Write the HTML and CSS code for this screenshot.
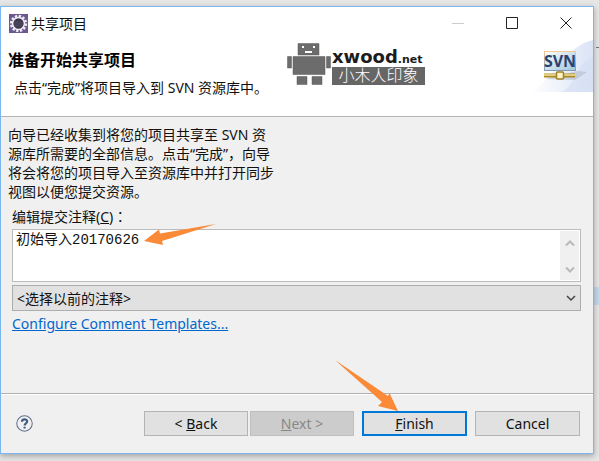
FILE: index.html
```html
<!DOCTYPE html>
<html lang="zh-CN">
<head>
<meta charset="utf-8">
<title>共享项目</title>
<link rel="stylesheet" href="styles.css">
</head>
<body>
<form class="dialog">
  <header class="titlebar">
    <svg class="app-icon" viewBox="0 0 20 20" aria-hidden="true">
      <rect width="20" height="20" fill="#6a588f"/>
      <circle cx="10" cy="10" r="7.600" fill="none" stroke="#f0edf4" stroke-width="3" stroke-dasharray="2.400 1.580"/>
      <circle cx="10" cy="10" r="6.200" fill="#3b374a" stroke="#f0edf4" stroke-width="1.600"/>
      <path d="M5.500 8.500h9M5 10.500h10M5.500 12.500h9" stroke="#5c5670" stroke-width=".8"/>
    </svg>
    <span class="title">共享项目</span>
    <div class="controls">
      <button type="button" class="control" aria-label="Minimize" disabled><svg viewBox="0 0 12 12"><path d="M0 6.500h12" stroke="#ccc"/></svg></button>
      <button type="button" class="control" aria-label="Maximize"><svg viewBox="0 0 12 12"><path d="M.5 .5h11v11h-11z" stroke="#222"/></svg></button>
      <button type="button" class="control" aria-label="Close"><svg viewBox="0 0 12 12"><path d="M.5 .5l11 11M11.500 .5l-11 11" stroke="#222"/></svg></button>
    </div>
  </header>

  <section class="banner">
    <div class="banner-text">
      <h1>准备开始共享项目</h1>
      <p>点击“完成”将项目导入到 SVN 资源库中。</p>
    </div>
    <div class="watermark">
      <svg class="robot" viewBox="0 0 44 42" aria-hidden="true">
        <g fill="#6c6c6c" stroke="#5a5a5a" stroke-width=".5">
          <path d="M11 .5h21v11.500H11zM6 13.500h32v18H6zM.5 13.500h4v11.500h-4zM39.500 13.500h4v11.500h-4zM10 33.500h10v8H10zM25 33.500h10v8H25z"/>
        </g>
        <path d="M15 3h2v2h-2zM26 3h2v2h-2zM18 8h7v2h-7z" fill="#fff"/>
      </svg>
      <div class="brand">
        <span class="brand-name">xwood<small>.net</small></span>
        <span class="brand-tag">小木人印象</span>
      </div>
    </div>
    <svg class="svn-art" viewBox="0 0 64 52" role="img" aria-label="SVN">
      <defs>
        <linearGradient id="glow" x1="0" x2="1"><stop offset="0" stop-color="#fff"/><stop offset="1" stop-color="#dbe4f6"/></linearGradient>
        <linearGradient id="card" x1="0" y1="0" x2="1" y2="1"><stop offset="0" stop-color="#fff"/><stop offset="1" stop-color="#9fc4dc"/></linearGradient>
        <linearGradient id="edge" x1="0" y1="0" x2="0" y2="1"><stop offset="0" stop-color="#f3c795"/><stop offset="1" stop-color="#7f9bb0"/></linearGradient>
      </defs>
      <path d="M0 52C25 42 32 8 64 0v52z" fill="url(#glow)"/>
      <path d="M32 52C48 46 46 22 64 17v35z" fill="#d3def4" opacity=".6"/>
      <path d="M16 39l32-8 10 1-12 8z" fill="#b3bac9" opacity=".6"/>
      <rect x="15.500" y="11.500" width="31" height="19" fill="url(#card)" stroke="url(#edge)"/>
      <text x="31" y="27" text-anchor="middle" class="svn-word">SVN</text>
      <path d="M15 35.500h31" stroke="#a98a25" stroke-width="4"/>
      <path d="M15 35h31" stroke="#f4e39a" stroke-width="1.500"/>
      <rect x="27.500" y="32" width="7" height="7" rx="1" fill="#fff5c4" stroke="#a27f24" stroke-width="1.500"/>
    </svg>
  </section>

  <main class="content">
    <p class="intro">向导已经收集到将您的项目共享至 SVN 资源库所需要的全部信息。点击“完成”，向导将会将您的项目导入至资源库中并打开同步视图以便您提交资源。</p>
    <div class="fields">
      <label for="comment">编辑提交注释(<u>C</u>)<span class="centered-mark" lang="zh-TW">：</span></label>
      <div class="comment-box">
        <textarea id="comment" spellcheck="false">初始导入20170626</textarea>
        <div class="scrollbar" aria-hidden="true">
          <svg viewBox="0 0 10 8"><path d="M1 6.500l4-4 4 4"/></svg>
          <svg viewBox="0 0 10 8"><path d="M1 1.500l4 4 4-4"/></svg>
        </div>
        <svg class="arrow arrow-comment" viewBox="0 0 72 24" aria-hidden="true"><path d="M0 17L15 5.500l1 4L72 0 18 17l1 4z"/></svg>
      </div>
      <div class="select-wrap">
        <select aria-label="选择以前的注释"><option>&lt;选择以前的注释&gt;</option></select>
        <svg viewBox="0 0 10 8" aria-hidden="true"><path d="M1 2l4 4 4-4"/></svg>
      </div>
      <a href="#templates">Configure Comment Templates...</a>
    </div>
  </main>

  <footer class="footer">
    <button type="button" class="help" aria-label="Help">
      <svg viewBox="0 0 16 16"><circle cx="8" cy="8" r="7.300"/><path class="mark" d="M5.600 6.300C5.600 3.400 10.500 3.400 10.500 6.100 10.500 7.800 8.100 7.900 8.100 9.900M8.100 11v1.800"/></svg>
    </button>
    <div class="actions">
      <div class="pager">
        <button type="button" class="btn">&lt; <u>B</u>ack</button>
        <button type="button" class="btn" disabled><u>N</u>ext &gt;</button>
      </div>
      <div class="finish">
        <button type="submit" class="btn btn-default"><u>F</u>inish</button>
        <svg class="arrow arrow-finish" viewBox="0 0 63 51" aria-hidden="true"><path d="M0 0L53 36l1.500-3L63 51 43 46l4-4z"/></svg>
      </div>
      <button type="button" class="btn">Cancel</button>
    </div>
  </footer>
</form>
</body>
</html>
```

FILE: styles.css
```css
* { box-sizing: border-box; }

body {
  margin: 0;
  padding: 6px 5px 7px 0;
  min-height: 100vh;
  display: flex;
  background:
    linear-gradient(#c5d9ea, #c5d9ea) right 0 top 287px / 5px 18px no-repeat,
    linear-gradient(#777, #777) right 0 top 47px / 3px 1px no-repeat,
    #e6e6e6;
  color: #111;
  font: 14px/19px "Noto Sans", "Noto Sans CJK SC", sans-serif;
}

h1, p { margin: 0; }
button, select, textarea { font: inherit; color: inherit; border-radius: 0; }
svg { display: block; fill: none; }

.dialog {
  flex: 1;
  display: flex;
  flex-direction: column;
  background: #f0f0f0;
  border: 1px solid #79b7ee;
  box-shadow: 0 2px 6px rgba(0, 0, 0, .3);
}

.titlebar {
  display: flex;
  align-items: center;
  height: 32px;
  padding-left: 8px;
  gap: 3px;
  background: #fff;
}
.app-icon { width: 19px; height: 19px; }
.controls { display: flex; margin-left: auto; }
.control {
  width: 54px;
  height: 32px;
  padding: 0;
  border: 0;
  background: none;
  display: grid;
  place-items: center;
}
.control svg { width: 12px; height: 12px; }

.banner {
  display: flex;
  height: 78px;
  background: #fff;
  border-bottom: 1px solid #b4b4b4;
}
.banner-text { flex: 1; padding: 10px 0 0 7px; }
.banner h1 { font-size: 16px; line-height: 22px; font-weight: 700; color: #000; }
.banner p { padding: 7px 0 0 6px; }

.watermark { display: flex; align-items: flex-start; gap: 1px; padding-top: 4px; }
.robot { width: 44px; height: 42px; }
.brand { display: flex; flex-direction: column; padding-top: 4px; width: 93px; }
.brand-name {
  height: 20px;
  font: 700 18px/20px "DejaVu Sans", sans-serif;
  color: #1c1c1c;
  white-space: nowrap;
}
.brand-name small { font-size: 11px; line-height: 1; }
.brand-tag {
  height: 18px;
  background: #666;
  color: #fff;
  text-align: center;
  font-size: 16px;
  line-height: 17px;
  font-weight: 300;
}
.svn-art { width: 64px; height: 52px; margin: 1px 0 0 104px; }
.svn-word { font: 700 16px "Open Sans", sans-serif; fill: #2c4370; }

.content { flex: 1; padding: 8px 12px 0 7px; }
.intro { width: 266px; }
.centered-mark { font-family: "Noto Sans CJK TC", sans-serif; line-height: 1; }
.fields { display: flex; flex-direction: column; align-items: stretch; padding: 6px 0 0 4px; }
.fields a { align-self: flex-start; margin-top: 3px; color: #0067cd; }

.comment-box {
  position: relative;
  display: flex;
  height: 53px;
  margin-top: 3px;
  padding: 1px;
  background: #fff;
  border: 1px solid #bcbcbc;
}
textarea {
  flex: 1;
  border: 0;
  padding: 0 2px;
  resize: none;
  outline: 0;
  overflow: hidden;
  background: none;
  font: 14px/18px "Liberation Mono", "Noto Sans CJK SC", monospace;
}
.scrollbar {
  width: 19px;
  padding: 8px 0 6px;
  display: flex;
  flex-direction: column;
  align-items: center;
  justify-content: space-between;
  background: #f0f0f0;
}
.scrollbar svg { width: 10px; height: 8px; stroke: #b9b9b9; stroke-width: 2; }

.select-wrap { display: grid; align-items: center; margin-top: 3px; }
.select-wrap > * { grid-area: 1 / 1; }
.select-wrap svg { justify-self: end; width: 10px; height: 8px; margin-right: 5px; stroke: #444; stroke-width: 1.5; pointer-events: none; }
select {
  appearance: none;
  width: 100%;
  height: 26px;
  padding: 0 4px;
  border: 1px solid #adadad;
  background: #e1e1e1;
}

.footer {
  display: flex;
  align-items: center;
  justify-content: space-between;
  height: 60px;
  padding: 0 13px 0 15px;
  border-top: 1px solid #b0b0b0;
  box-shadow: inset 0 1px #fff;
}
.help { padding: 0; border: 0; background: none; }
.help svg { width: 17px; height: 17px; stroke: #60748f; stroke-width: 1; }
.help .mark { stroke: #405b80; stroke-width: 2; }
.actions { display: flex; gap: 8px; }
.pager { display: flex; gap: 2px; }
.btn {
  width: 105px;
  height: 25px;
  padding: 0;
  border: 1px solid #b4b4b4;
  background: #e1e1e1;
}
.pager .btn { width: 104px; }
.btn:disabled { background: #ccc; border-color: #bfbfbf; color: #888; }
.btn-default { border: 2px solid #0078d7; }
.finish { position: relative; }

.arrow { position: absolute; fill: #fa8938; pointer-events: none; }
.arrow-comment { left: 131px; top: -6px; width: 72px; height: 24px; }
.arrow-finish { left: -27px; bottom: 25px; width: 63px; height: 51px; }
```
